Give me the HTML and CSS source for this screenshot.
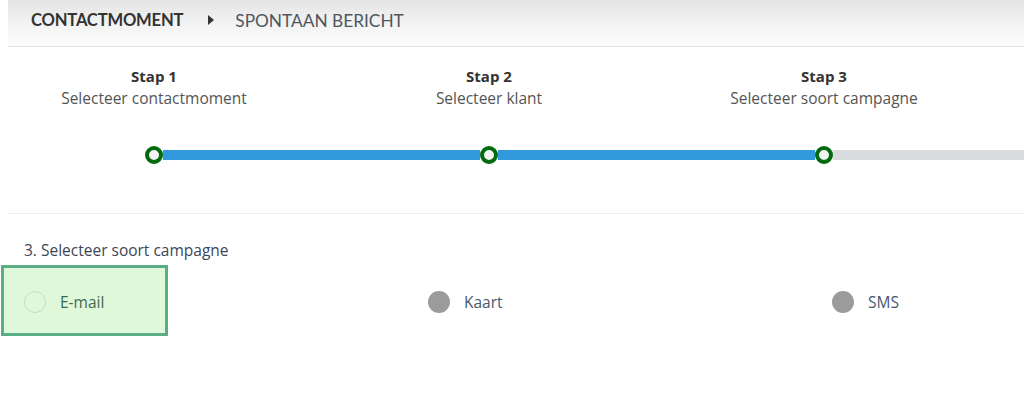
FILE: index.html
```html
<!DOCTYPE html>
<html lang="nl">
<head>
<meta charset="utf-8">
<title>Spontaan bericht</title>
<link rel="stylesheet" href="styles.css">
</head>
<body>
<header class="crumbs">
  <span class="crumb crumb-main">CONTACTMOMENT</span>
  <span class="crumb-sep"></span>
  <span class="crumb">SPONTAAN BERICHT</span>
</header>

<section class="steps">
  <div class="step-labels">
    <div class="step-label"><div class="step-title">Stap 1</div><div class="step-sub">Selecteer contactmoment</div></div>
    <div class="step-label"><div class="step-title">Stap 2</div><div class="step-sub">Selecteer klant</div></div>
    <div class="step-label"><div class="step-title">Stap 3</div><div class="step-sub">Selecteer soort campagne</div></div>
  </div>
  <div class="track">
    <span class="node"></span>
    <span class="seg seg-done"></span>
    <span class="node"></span>
    <span class="seg seg-done"></span>
    <span class="node"></span>
    <span class="seg seg-todo"></span>
  </div>
</section>

<hr class="divider">

<section class="choice">
  <div class="choice-title">3. Selecteer soort campagne</div>
  <div class="options">
    <label class="option option-active"><span class="radio radio-empty"></span><span class="option-text">E-mail</span></label>
    <label class="option"><span class="radio radio-filled"></span><span class="option-text">Kaart</span></label>
    <label class="option"><span class="radio radio-filled"></span><span class="option-text">SMS</span></label>
  </div>
</section>
</body>
</html>
```

FILE: styles.css
```css
html, body {
  margin: 0;
  padding: 0;
  background: #ffffff;
  overflow: hidden;
}

body {
  font-family: "Open Sans", "Liberation Sans", sans-serif;
  font-size: 15.5px;
  color: #333;
}

.crumbs {
  margin-left: 8px;
  border-bottom: 1px solid #e4e4e4;
  background: linear-gradient(to bottom, #e4e4e4 0%, #f4f4f4 55%, #fbfbfb 100%);
  display: flex;
  align-items: center;
  padding: 0 0 6px 23px;
  box-sizing: border-box;
  height: 47px;
  font-family: "Lato", "Noto Sans", sans-serif;
}

.crumb {
  color: #4f5660;
  font-size: 17.3px;
}

.crumb-main {
  font-weight: 700;
  color: #333;
  font-size: 16.6px;
  letter-spacing: -0.2px;
}

.crumb-sep {
  width: 0;
  height: 0;
  border-top: 5px solid transparent;
  border-bottom: 5px solid transparent;
  border-left: 6px solid #333;
  margin: 0 21px 0 25px;
}

.steps {
  padding-top: 18px;
}

.step-labels {
  display: grid;
  grid-template-columns: repeat(3, 308px);
  column-gap: 27px;
  text-align: center;
}

.step-title {
  font-weight: 700;
  font-size: 15px;
  line-height: 22px;
  color: #333;
}

.step-sub {
  color: #555;
  line-height: 23px;
}

.track {
  display: flex;
  align-items: center;
  margin-top: 36px;
  margin-left: 145px;
  height: 18px;
}

.node {
  flex: none;
  width: 18px;
  height: 18px;
  box-sizing: border-box;
  border: 4px solid #006a0f;
  border-radius: 50%;
  background: #f3f3f3;
}

.seg {
  flex: none;
  width: 317px;
  height: 10px;
}

.seg-done {
  background: #3199db;
}

.seg-todo {
  flex: 1;
  width: auto;
  background: #d8dcdf;
}

.divider {
  margin: 49px 0 0 8px;
  border: 0;
  border-top: 1px solid #eeeeee;
  height: 0;
}

.choice-title {
  margin: 26px 0 0 24px;
  line-height: 20px;
  color: #3b4656;
}

.options {
  display: grid;
  grid-template-columns: 404px 404px 1fr;
  margin: 5px 0 0 1px;
}

.option {
  display: flex;
  align-items: center;
  height: 71px;
  box-sizing: border-box;
  padding: 3px 0 0 20px;
  border: 3px solid transparent;
  color: #46586c;
}

.option-active {
  width: 167px;
  border-color: #5aad84;
  background: #dff8da;
  color: #3f6a50;
}

.radio {
  flex: none;
  width: 22px;
  height: 22px;
  border-radius: 50%;
  box-sizing: border-box;
  margin-right: 14px;
}

.radio-empty {
  border: 1px solid #c7dcc6;
}

.radio-filled {
  background: #9b9b9b;
}
```
